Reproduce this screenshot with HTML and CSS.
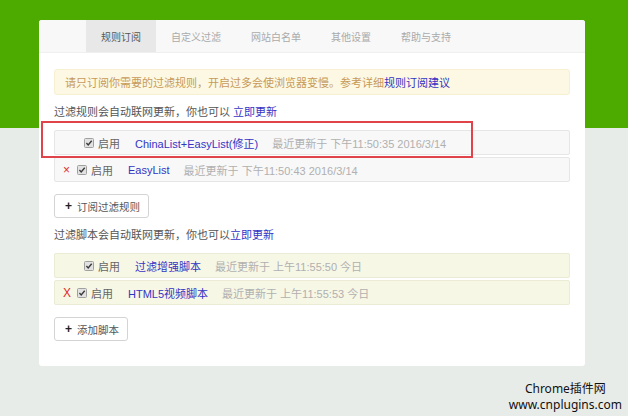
FILE: index.html
```html
<!DOCTYPE html>
<html lang="zh-CN">
<head>
<meta charset="utf-8">
<title>规则订阅</title>
<link rel="stylesheet" href="styles.css">
</head>
<body>
<div class="page">
  <div class="card">
    <nav class="tabs">
      <span class="tab active">规则订阅</span>
      <span class="tab">自定义过滤</span>
      <span class="tab">网站白名单</span>
      <span class="tab">其他设置</span>
      <span class="tab">帮助与支持</span>
    </nav>
    <div class="content">
      <div class="notice">请只订阅你需要的过滤规则，开启过多会使浏览器变慢。参考详细<a class="link">规则订阅建议</a></div>
      <p class="intro">过滤规则会自动联网更新，你也可以 <a class="link">立即更新</a></p>
      <div class="list">
        <div class="row gray indent">
          <span class="cb"><svg width="10" height="10" viewBox="0 0 10 10"><rect x="0.5" y="0.5" width="9" height="9" rx="1" fill="#e2e2e2" stroke="#a0a0a0"/><path d="M2.4 5.1 L4.2 6.9 L7.7 2.8" fill="none" stroke="#3a3a3a" stroke-width="1.4"/></svg></span>
          <span class="label">启用</span>
          <a class="name">ChinaList+EasyList(修正)</a>
          <span class="date">最近更新于 下午11:50:35 2016/3/14</span>
        </div>
        <div class="row gray">
          <span class="del small">×</span>
          <span class="cb"><svg width="10" height="10" viewBox="0 0 10 10"><rect x="0.5" y="0.5" width="9" height="9" rx="1" fill="#e2e2e2" stroke="#a0a0a0"/><path d="M2.4 5.1 L4.2 6.9 L7.7 2.8" fill="none" stroke="#3a3a3a" stroke-width="1.4"/></svg></span>
          <span class="label">启用</span>
          <a class="name">EasyList</a>
          <span class="date">最近更新于 下午11:50:43 2016/3/14</span>
        </div>
        <div class="mark"></div>
      </div>
      <button class="btn"><span class="plus">+</span>订阅过滤规则</button>
      <p class="intro second">过滤脚本会自动联网更新，你也可以<a class="link">立即更新</a></p>
      <div class="list">
        <div class="row yellow indent">
          <span class="cb"><svg width="10" height="10" viewBox="0 0 10 10"><rect x="0.5" y="0.5" width="9" height="9" rx="1" fill="#e2e2e2" stroke="#a0a0a0"/><path d="M2.4 5.1 L4.2 6.9 L7.7 2.8" fill="none" stroke="#3a3a3a" stroke-width="1.4"/></svg></span>
          <span class="label">启用</span>
          <a class="name">过滤增强脚本</a>
          <span class="date">最近更新于 上午11:55:50 今日</span>
        </div>
        <div class="row yellow">
          <span class="del big">X</span>
          <span class="cb"><svg width="10" height="10" viewBox="0 0 10 10"><rect x="0.5" y="0.5" width="9" height="9" rx="1" fill="#e2e2e2" stroke="#a0a0a0"/><path d="M2.4 5.1 L4.2 6.9 L7.7 2.8" fill="none" stroke="#3a3a3a" stroke-width="1.4"/></svg></span>
          <span class="label">启用</span>
          <a class="name">HTML5视频脚本</a>
          <span class="date">最近更新于 上午11:55:53 今日</span>
        </div>
      </div>
      <button class="btn"><span class="plus">+</span>添加脚本</button>
    </div>
  </div>
  <div class="watermark">
    <div class="wm-line">Chrome插件网</div>
    <div class="wm-line">www.cnplugins.com</div>
  </div>
</div>
</body>
</html>
```

FILE: styles.css
```css
html, body {
  margin: 0;
  padding: 0;
}
body {
  font-family: "Liberation Sans", "Noto Sans CJK SC", sans-serif;
  font-size: 11px;
  color: #555;
}
.page {
  min-height: 416px;
  background: linear-gradient(to bottom, #4dab00 0, #4dab00 128px, #e8ece9 128px, #e8ece9 100%);
  padding-top: 20px;
  box-sizing: border-box;
  overflow: hidden;
}
.card {
  margin-left: 39px;
  width: 546px;
  height: 346px;
  background: #fff;
  border-radius: 3px;
  box-sizing: border-box;
}
.tabs {
  display: flex;
  height: 33px;
  padding-left: 47px;
  background: #f8f8f8;
  border-bottom: 1px solid #efefef;
  border-radius: 3px 3px 0 0;
  box-sizing: border-box;
}
.tab {
  display: flex;
  align-items: center;
  padding: 0 15px;
  font-size: 10px;
  color: #aaa;
}
.tab.active {
  background: #e8e8e8;
  color: #555;
}
.content {
  padding: 16px 15px 0 15px;
}
.notice {
  height: 26px;
  box-sizing: border-box;
  padding: 0 10px;
  display: flex;
  align-items: center;
  background: #fcf8e3;
  border: 1px solid #f6efd2;
  border-radius: 3px;
  color: #c79a5a;
}
.link {
  color: #3434c4;
}
.intro {
  margin: 9px 0 0 0;
  height: 16px;
  line-height: 16px;
}
.list {
  position: relative;
  margin-top: 10px;
  display: flex;
  flex-direction: column;
  gap: 2px;
}
.row {
  height: 25px;
  box-sizing: border-box;
  display: flex;
  align-items: center;
  padding-left: 8px;
  border-radius: 2px;
}
.row.indent {
  padding-left: 29px;
}
.row.gray {
  background: #f8f8f8;
  border: 1px solid #e6e6e6;
}
.row.yellow {
  background: #f7f7e6;
  border: 1px solid #ebebd6;
}
.del {
  color: #e02b2b;
  width: 7px;
  margin-right: 7px;
  text-align: center;
}
.del.small {
  font-size: 12px;
}
.del.big {
  font-size: 12px;
}
.cb {
  display: flex;
  width: 10px;
  height: 10px;
  margin-right: 4px;
}
.label {
  color: #666;
  margin-right: 15px;
}
.name {
  color: #3434c4;
  margin-right: 14px;
}
.date {
  color: #b0b0b0;
}
.mark {
  position: absolute;
  left: -13px;
  top: -9px;
  width: 432px;
  height: 37px;
  border: 2px solid #e0444a;
  box-sizing: border-box;
  pointer-events: none;
}
.btn {
  display: flex;
  align-items: center;
  margin-top: 13px;
  height: 24px;
  padding: 0 8px 0 10px;
  background: #fff;
  border: 1px solid #d4d4d4;
  border-radius: 3px;
  font-family: inherit;
  font-size: 10.5px;
  color: #555;
}
.list + .btn {
  margin-top: 12px;
}
.plus {
  font-weight: bold;
  color: #222;
  font-size: 12px;
  margin-right: 5px;
}
.watermark {
  margin: 15px 6px 0 auto;
  width: max-content;
  display: flex;
  flex-direction: column;
  align-items: center;
  font-family: "Noto Sans", "Noto Sans CJK SC", sans-serif;
  font-size: 12px;
  color: #111;
}
.wm-line {
  white-space: nowrap;
  line-height: 16px;
}
```
